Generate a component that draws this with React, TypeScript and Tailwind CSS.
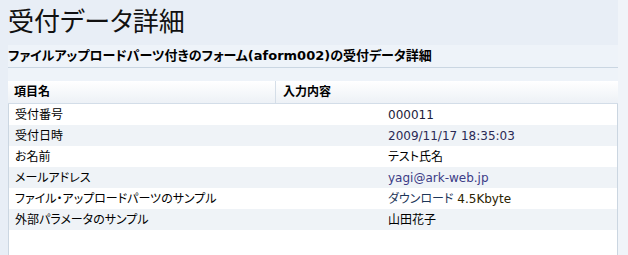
const rows = [
  { label: '受付番号', value: <span className="text-[#1c1c3a]">000011</span> },
  { label: '受付日時', value: <span className="text-[#2a2a55]">2009/11/17 18:35:03</span> },
  { label: 'お名前', value: <span className="text-black">テスト氏名</span> },
  { label: 'メールアドレス', value: <span className="text-[#3b3b86]">yagi@ark-web.jp</span> },
  {
    label: 'ファイル・アップロードパーツのサンプル',
    value: (
      <span>
        <span className="text-[#1d3557]">ダウンロード</span>{' '}
        <span className="text-[#2b2200]">4.5Kbyte</span>
      </span>
    ),
  },
  { label: '外部パラメータのサンプル', value: <span className="text-black">山田花子</span> },
];

const jp = "font-['DejaVu_Sans','Noto_Sans_CJK_JP',sans-serif] [font-feature-settings:'palt']";

const App = () => {
  return (
    <div className={`flex h-[255px] w-[628px] overflow-hidden bg-[#f0f4f9] ${jp}`}>
      <div className="flex w-[618px] flex-col bg-[#e8eef6]">
        <h1 className="flex h-[45px] items-center pl-2 pb-[2px] text-[26px] leading-none text-[#111]">
          受付データ詳細
        </h1>
        <div className="ml-2 flex flex-1 flex-col bg-[#eef3f9]">
          <h2 className="flex h-[22px] items-center text-[13px] font-bold text-black">
            ファイルアップロードパーツ付きのフォーム(aform002)の受付データ詳細
          </h2>
          <div className="h-px bg-[#cad6e2]" />
          <div className="h-[13px]" />
          <div className="grid h-[23px] grid-cols-[267px_1fr] border-b border-[#d3dde8] bg-gradient-to-b from-white to-[#edf1f6] text-[12px] font-bold text-black">
            <div className="flex items-center pl-[6px]">項目名</div>
            <div className="flex items-center border-l border-[#d5dee8] pl-[7px]">入力内容</div>
          </div>
          <div className="flex-1 border-x border-[#cbd6e1] bg-white text-[12px]">
            {rows.map((r, i) => (
              <div
                key={r.label}
                className={`grid h-[21px] grid-cols-[373px_1fr] items-center ${i % 2 === 1 ? 'bg-[#eff3f7]' : 'bg-white'}`}
              >
                <div className="pl-[6px] text-black">{r.label}</div>
                <div className="pl-[6px]">{r.value}</div>
              </div>
            ))}
          </div>
        </div>
      </div>
    </div>
  );
};

export default App;
